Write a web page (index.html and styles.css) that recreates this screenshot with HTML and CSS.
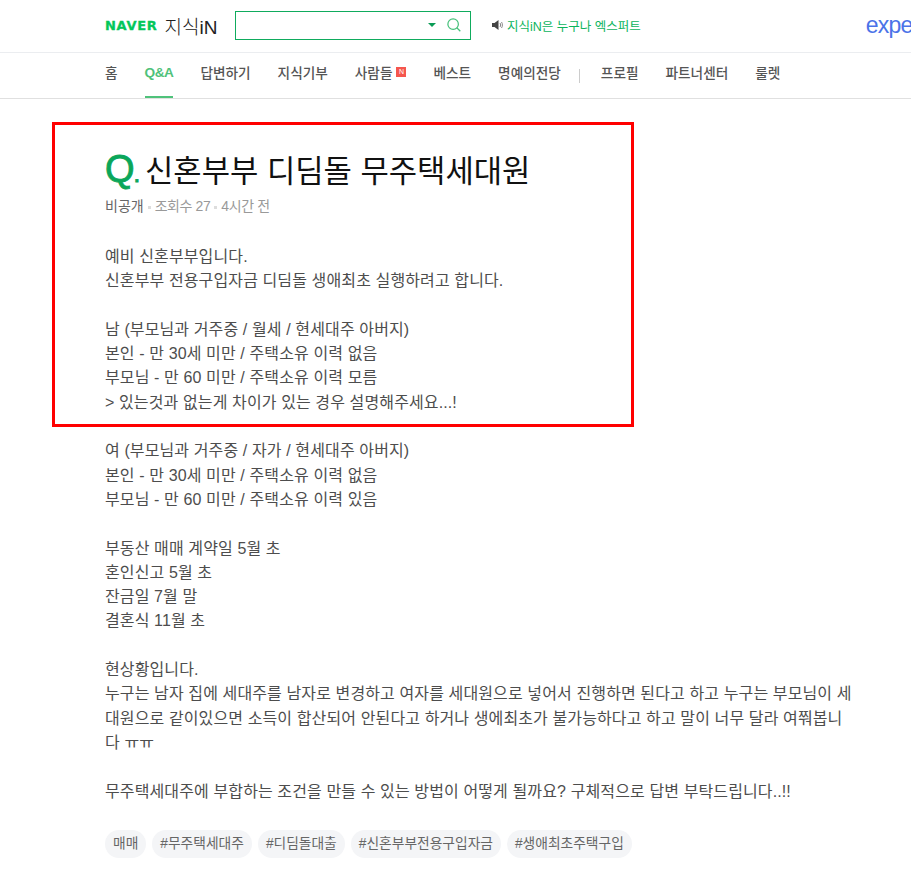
FILE: index.html

```html
<!DOCTYPE html>
<html lang="ko">
<head>
    <meta charset="UTF-8">
    <meta name="viewport" content="width=device-width, initial-scale=1.0">
    <title>지식iN</title>
    <link rel="stylesheet" href="styles.css">
</head>
<body>
    <header class="top">
        <div class="logo">
            <span class="logo-naver">NAVER</span>
            <span class="logo-in">지식iN</span>
        </div>
        <div class="search">
            <span class="search-caret"></span>
            <svg class="search-icon" width="14" height="14" viewBox="0 0 16 16" fill="none">
                <circle cx="7" cy="7" r="6" stroke="#45c07a" stroke-width="1.4"/>
                <path d="M11.2 11.2l4 4" stroke="#45c07a" stroke-width="1.4"/>
            </svg>
        </div>
        <div class="notice">
            <svg class="notice-icon" width="11" height="10" viewBox="0 0 11 10">
                <path d="M0 3h2.5L6.5 0v10L2.5 7H0z" fill="#444"/>
                <path d="M8 3c.8 1 .8 3 0 4M9.5 2c1.2 1.6 1.2 4.4 0 6" stroke="#888" fill="none"/>
            </svg>
            지식iN은 누구나 엑스퍼트
        </div>
        <div class="expert-logo">expert</div>
    </header>

    <nav class="menu">
        <a class="menu-item">홈</a>
        <a class="menu-item active">Q&amp;A</a>
        <a class="menu-item">답변하기</a>
        <a class="menu-item">지식기부</a>
        <a class="menu-item">사람들<span class="new-badge">N</span></a>
        <a class="menu-item">베스트</a>
        <a class="menu-item">명예의전당</a>
        <span class="menu-divider"></span>
        <a class="menu-item">프로필</a>
        <a class="menu-item">파트너센터</a>
        <a class="menu-item">룰렛</a>
    </nav>

    <main class="question">
        <h1 class="title"><span class="title-q">Q<span class="title-dot">.</span></span>신혼부부 디딤돌 무주택세대원</h1>
        <div class="meta">
            <span>비공개</span><i class="meta-dot"></i><span class="meta-light">조회수 27</span><i class="meta-dot"></i><span class="meta-light">4시간 전</span>
        </div>
        <div class="content">
            예비 신혼부부입니다.<br>
            신혼부부 전용구입자금 디딤돌 생애최초 실행하려고 합니다.<br>
            <br>
            남 (부모님과 거주중 / 월세 / 현세대주 아버지)<br>
            본인 - 만 30세 미만 / 주택소유 이력 없음<br>
            부모님 - 만 60 미만 / 주택소유 이력 모름<br>
            &gt; 있는것과 없는게 차이가 있는 경우 설명해주세요...!<br>
            <br>
            여 (부모님과 거주중 / 자가 / 현세대주 아버지)<br>
            본인 - 만 30세 미만 / 주택소유 이력 없음<br>
            부모님 - 만 60 미만 / 주택소유 이력 있음<br>
            <br>
            부동산 매매 계약일 5월 초<br>
            혼인신고 5월 초<br>
            잔금일 7월 말<br>
            결혼식 11월 초<br>
            <br>
            현상황입니다.<br>
            누구는 남자 집에 세대주를 남자로 변경하고 여자를 세대원으로 넣어서 진행하면 된다고 하고 누구는 부모님이 세<br>
            대원으로 같이있으면 소득이 합산되어 안된다고 하거나 생에최초가 불가능하다고 하고 말이 너무 달라 여쭤봅니<br>
            다 ㅠㅠ<br>
            <br>
            무주택세대주에 부합하는 조건을 만들 수 있는 방법이 어떻게 될까요? 구체적으로 답변 부탁드립니다..!!
        </div>
        <div class="tags">
            <span class="tag">매매</span>
            <span class="tag">#무주택세대주</span>
            <span class="tag">#디딤돌대출</span>
            <span class="tag">#신혼부부전용구입자금</span>
            <span class="tag">#생애최초주택구입</span>
        </div>
    </main>

    <div class="highlight"></div>
</body>
</html>
```

FILE: styles.css

```css
html, body {
    margin: 0;
    height: 872px;
    overflow: hidden;
}
body {
    position: relative;
    width: 911px;
    background-color: #fff;
    font-family: "Liberation Sans", "Noto Sans CJK KR", sans-serif;
    color: #333;
}
.top {
    display: flex;
    align-items: center;
    height: 50px;
    padding: 0 0 2px 105px;
    border-bottom: 1px solid #ebedf0;
    overflow: hidden;
}
.top > * {
    flex-shrink: 0;
}
.logo {
    display: flex;
    align-items: center;
    width: 130px;
}
.logo-naver {
    font-family: "DejaVu Sans", sans-serif;
    font-size: 13px;
    font-weight: bold;
    letter-spacing: 0.7px;
    color: #03c75a;
    -webkit-text-stroke: 0.3px #03c75a;
}
.logo-in {
    margin-left: 7px;
    font-size: 19px;
    font-weight: 300;
    color: #222;
}
.search {
    display: flex;
    align-items: center;
    justify-content: flex-end;
    box-sizing: border-box;
    width: 236px;
    height: 29px;
    padding-right: 9px;
    border: 1px solid #0fab5d;
}
.search-caret {
    width: 0;
    height: 0;
    margin-right: 11px;
    border-left: 4px solid transparent;
    border-right: 4px solid transparent;
    border-top: 4px solid #0a9c55;
}
.notice {
    display: flex;
    align-items: center;
    margin-left: 21px;
    font-size: 12.5px;
    color: #0cb45d;
    white-space: nowrap;
}
.notice-icon {
    margin-right: 4px;
}
.expert-logo {
    margin-left: 225px;
    font-size: 23px;
    letter-spacing: -0.8px;
    color: #4b73e8;
}
.menu {
    display: flex;
    align-items: center;
    height: 45px;
    padding-left: 105px;
    border-bottom: 1px solid #e0e0e0;
    gap: 27px;
}
.menu-item {
    display: flex;
    align-items: center;
    height: 45px;
    box-sizing: border-box;
    padding-bottom: 5px;
    font-size: 13.65px;
    font-weight: 500;
    color: #555;
    border-bottom: 2px solid transparent;
}
.menu-item.active {
    font-weight: bold;
    letter-spacing: -0.5px;
    color: #4fc27a;
    border-bottom-color: #4fc27a;
}
.new-badge {
    display: inline-block;
    width: 10px;
    height: 10px;
    margin-left: 4px;
    font-size: 7px;
    line-height: 10px;
    text-align: center;
    color: #fff;
    background-color: #f5564e;
}
.menu-divider {
    width: 1px;
    height: 14px;
    margin: 0 -6px 0 -9px;
    background-color: #ccc;
}
.question {
    padding: 47px 0 0 105px;
}
.title {
    display: flex;
    align-items: center;
    margin: 0;
    height: 44px;
    font-size: 30.8px;
    font-weight: normal;
    color: #111;
    white-space: nowrap;
}
.title-q {
    flex-shrink: 0;
    width: 40px;
    margin-top: 3px;
    font-size: 38px;
    color: #0aa65a;
    -webkit-text-stroke: 0.9px #0aa65a;
}
.title-dot {
    margin-left: -1px;
    font-size: 24px;
}
.meta {
    display: flex;
    align-items: center;
    margin-top: 5px;
    font-size: 14px;
    color: #666;
}
.meta-light {
    letter-spacing: -0.4px;
    color: #999;
}
.meta-dot {
    width: 3px;
    height: 3px;
    margin: 4px 4px 0;
    background-color: #ddd;
}
.content {
    margin-top: 30px;
    font-size: 16px;
    line-height: 24.3px;
    letter-spacing: 0.12px;
    color: #4d4d4d;
    white-space: nowrap;
}
.tags {
    display: flex;
    gap: 6px;
    margin-top: 26px;
}
.tag {
    padding: 0 8px;
    height: 28px;
    line-height: 27px;
    font-size: 13.75px;
    color: #666;
    background-color: #f4f5f7;
    border-radius: 14px;
}
.highlight {
    position: absolute;
    left: 52px;
    top: 122px;
    width: 576px;
    height: 299px;
    border: 3px solid #f00;
}
```
